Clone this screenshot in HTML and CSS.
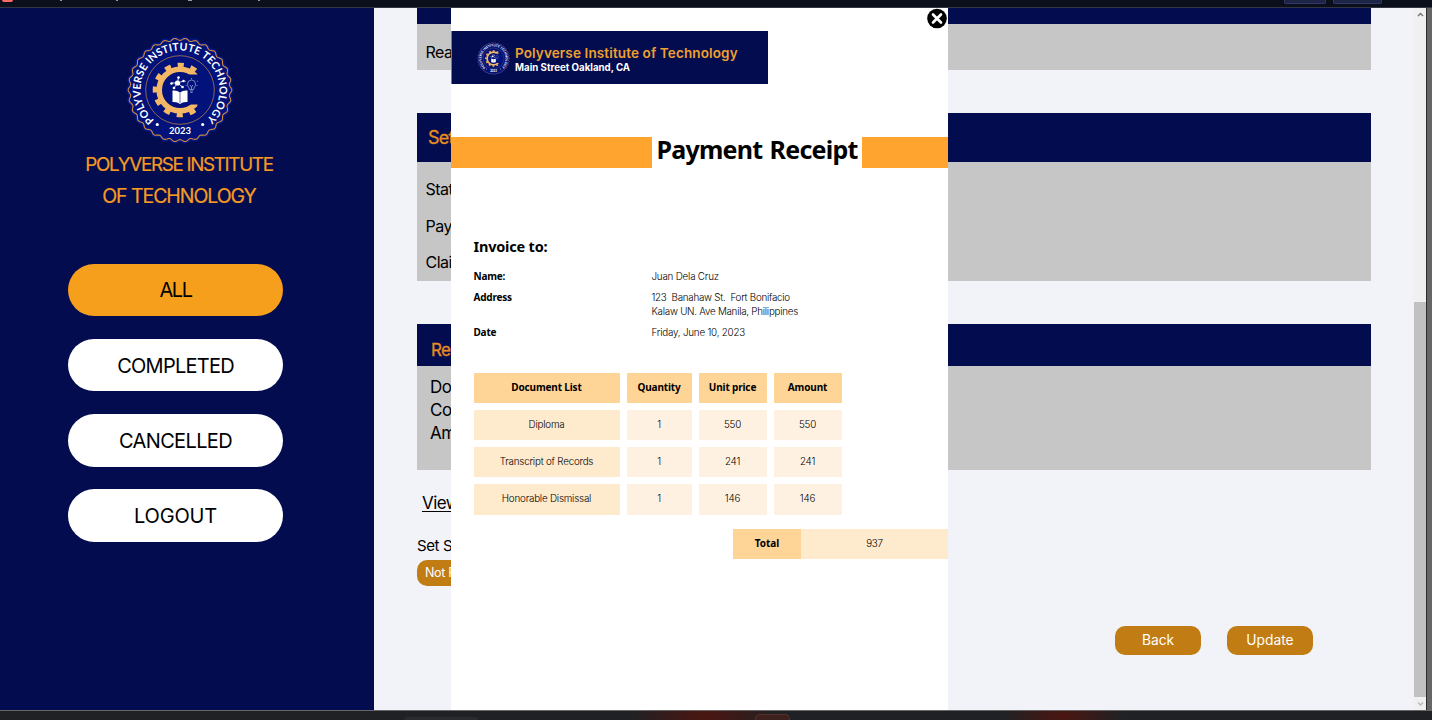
FILE: index.html
```html
<!DOCTYPE html>
<html lang="en">
<head>
<meta charset="utf-8">
<title>Polyverse Institute of Technology</title>
<link rel="stylesheet" href="styles.css">
</head>
<body>
<div class="screen">
  <div class="top-strip"><i class="rec"></i><i class="t t1"></i><i class="t t2"></i><i class="t t3"></i><i class="t t4"></i><i class="tab tab1"></i><i class="tab tab2"></i></div>
  <div class="window">
    <aside class="sidebar">
      <svg id="seal" class="logo" viewBox="-54 -54 108 108">
        <path class="scallop-glow" d=""/>
        <path class="scallop" d=""/>
        <circle r="34.3" fill="none" stroke="#9c6f4c" stroke-width=".9"/>
        <path id="ring" d="M-25.700 30A39.5 39.5 0 1 1 25.700 30" fill="none"/>
        <text class="seal-text"><textPath href="#ring">POLYVERSE INSTITUTE TECHNOLOGY</textPath></text>
        <text class="seal-year" x="0" y="43.5" text-anchor="middle">2023</text>
        <circle cx="-22.7" cy="34.5" r="1.6" fill="#fff"/>
        <circle cx="22.7" cy="34.5" r="1.6" fill="#fff"/>
        <clipPath id="cut"><path d="M-30-30H17.5V-15.500H8V14.500H17.5V30H-30Z"/></clipPath>
        <g clip-path="url(#cut)" fill="none" stroke="#f3b765">
          <circle r="20.8" stroke-width="5.600"/>
          <circle r="24.700" stroke-width="5.2" stroke-dasharray="6.2 6.733" stroke-dashoffset="3.1"/>
        </g>
        <g fill="#fff">
          <path d="M-7.500 0.500Q-3 0 0 2.500Q3 0 7.500 0.500V12Q3 11.500 0 14Q-3 11.500-7.500 12Z"/>
          <circle cx="-2.500" cy="-7" r="2.600"/><circle cx="-1.500" cy="-12.500" r="1.300"/><circle cx="3.500" cy="-9" r="1.300"/>
          <circle cx="-8.500" cy="-6.500" r="1.300"/><circle cx="-6" cy="-2" r="1.300"/><circle cx="2.500" cy="-3" r="1.300"/>
        </g>
        <path d="M-2.500-7L-1.500-12.500M-2.500-7L3.500-9M-2.500-7H-8.500M-2.500-7L-6-2M-2.500-7L2.500-3" stroke="#fff" stroke-width=".8"/>
        <path d="M0 2.500V13" stroke="#0a1a7a" stroke-width=".6"/>
        <g fill="none" stroke="#a9b2dc" stroke-width=".7">
          <path d="M9.500-.5C9-3 7.500-3.500 7.500-6A4 4 0 0 1 15.500-6C15.500-3.500 14-3 13.500-.5ZM10 1H13M10.500 2.500H12.500M10-5L11.500-3L13-5M11.500-3V-.5"/>
          <path d="M11.500-12V-10.800M6-8.500L5-9M17-8.500L18-9M5.500-4.500H6.500M16.500-4.500H17.500"/>
        </g>
      </svg>
      <div class="brand"><span class="b1">POLYVERSE INSTITUTE</span><br><span class="b2">OF TECHNOLOGY</span></div>
      <nav class="nav">
        <a class="pill active"><span class="p1">ALL</span></a>
        <a class="pill"><span class="p2">COMPLETED</span></a>
        <a class="pill"><span class="p3">CANCELLED</span></a>
        <a class="pill"><span class="p4">LOGOUT</span></a>
      </nav>
    </aside>
    <main class="content">
      <section class="card c1"><header></header><div class="body"><p>Rea</p></div></section>
      <section class="card c2"><header>Set</header><div class="body"><p>Stat</p><p>Pay</p><p>Clai</p></div></section>
      <section class="card c3"><header>Re</header><div class="body"><p>Do</p><p>Co</p><p>Am</p></div></section>
      <a class="view">View</a>
      <div class="set">Set S</div>
      <div class="badge">Not F</div>
      <div class="actions"><button><span>Back</span></button><button><span>Update</span></button></div>
    </main>
    <div class="scrollbar">
      <svg width="12" height="14" viewBox="0 0 12 14"><path d="M4 8L6.500 5.500L9 8" fill="none" stroke="#777" stroke-width="1.500"/></svg>
      <div class="thumb"></div>
      <svg width="12" height="13" viewBox="0 0 12 13"><path d="M4 5.500L6.500 8L9 5.500" fill="none" stroke="#bbb" stroke-width="1.500"/></svg>
    </div>
    <div class="edge"></div>

    <div class="modal">
      <svg class="close" viewBox="0 0 20 20"><circle cx="10" cy="10" r="9.800"/><path d="M6 6L14 14M14 6L6 14" stroke="#fff" stroke-width="2.600" stroke-linecap="round"/></svg>
      <div class="letterhead">
        <svg class="mini" viewBox="-54 -54 108 108"><use href="#seal" x="-54" y="-54" width="108" height="108"/></svg>
        <div><div class="org">Polyverse Institute of Technology</div><div class="street">Main Street Oakland, CA</div></div>
      </div>
      <div class="band"><h1><span>Payment Receipt</span></h1></div>
      <h2>Invoice to:</h2>
      <dl class="info">
        <dt>Name:</dt><dd>Juan Dela Cruz</dd>
        <dt>Address</dt><dd><span class="a1">123&nbsp; Banahaw St.&nbsp; Fort Bonifacio</span><br><span class="a2">Kalaw UN. Ave Manila, Philippines</span></dd>
        <dt>Date</dt><dd>Friday, June 10, 2023</dd>
      </dl>
      <div class="table">
        <b>Document List</b><b>Quantity</b><b>Unit price</b><b>Amount</b>
        <span class="doc">Diploma</span><span>1</span><span>550</span><span>550</span>
        <span class="doc">Transcript of Records</span><span>1</span><span>241</span><span>241</span>
        <span class="doc">Honorable Dismissal</span><span>1</span><span>146</span><span>146</span>
      </div>
      <div class="total"><b>Total</b><span>937</span></div>
    </div>
  </div>
  <div class="bottom-strip"><i class="dock d1"></i><i class="dock d2"></i></div>
</div>
<script src="seal.js"></script>
</body>
</html>
```
FILE: styles.css
```css
* { box-sizing: border-box; margin: 0; padding: 0; }
body { width: 1432px; height: 720px; overflow: hidden; font-family: Inter, "Open Sans", sans-serif; color: #000; }
.screen { display: flex; flex-direction: column; height: 720px; }
.top-strip { position: relative; height: 8px; background: #0b0e1b; border-bottom: 1px solid #343641; }
.top-strip i { position: absolute; top: 0; }
.rec { left: 2px; width: 11px; height: 2px; background: #fa6868; border-radius: 0 0 2px 2px; }
.t { width: 2px; height: 1px; background: #999; }
.t1 { left: 60px; } .t2 { left: 116px; } .t3 { left: 188px; width: 4px; } .t4 { left: 258px; }
.tab { height: 4px; background: #1e2445; border: 1px solid #303869; border-top: 0; border-radius: 0 0 2px 2px; }
.tab1 { left: 1284px; width: 42px; } .tab2 { left: 1333px; width: 49px; }
.window { position: relative; display: flex; height: 702px; background: #f2f3f9; }
.sidebar { width: 374px; background: #020c4f; padding-top: 28px; }
.logo { display: block; width: 108px; height: 108px; margin-left: 126px; }
.scallop { fill: #02127a; stroke: #cf8a3e; stroke-width: 1.1; }
.scallop-glow { fill: none; stroke: #04188a; stroke-width: 4; }
.seal-text { fill: #fff; font: 700 10.600px Lato, sans-serif; letter-spacing: .05px; }
.seal-year { fill: #fff; font: 700 9.5px Lato, sans-serif; }
.brand { width: 358px; margin-top: 5px; text-align: center; color: #f59a23; font-size: 19.5px; line-height: 30.5px; white-space: nowrap; -webkit-text-stroke: .2px #f59a23; }
.b1 { font-size: 18.8px; letter-spacing: -1.3px; } .b2 { letter-spacing: -1.05px; }
.nav { display: flex; flex-direction: column; gap: 22.8px; margin: 52.500px 0 0 68px; width: 215px; }
.pill { display: flex; align-items: center; justify-content: center; height: 52.5px; border-radius: 27px; background: #fff; font-size: 20px; padding-top: 1px; }
.pill.active { background: #f69f1c; }
.p1 { letter-spacing: -1.5px; } .p2 { letter-spacing: -.75px; } .p3 { letter-spacing: -.65px; } .p4 { letter-spacing: -.2px; }
.content { width: 1040px; padding-left: 43px; }
.card { width: 954px; background: #c6c6c6; margin-bottom: 43px; }
.card header { background: #020c4f; color: #e88d1f; letter-spacing: -.8px; -webkit-text-stroke: .3px #e88d1f; }
.card p { letter-spacing: -.5px; }
.c1 header { height: 16px; }
.c1 .body { height: 46px; padding-top: 10px; }
.c1 p, .c2 p { padding-left: 8.500px; font-size: 16px; line-height: 36.5px; }
.c2 header { height: 49px; padding-left: 11px; font-size: 18px; line-height: 50px; }
.c2 .body { height: 119px; padding-top: 9px; }
.c3 { margin-bottom: 0; }
.c3 header { height: 42px; padding-left: 14px; font-size: 17px; line-height: 52px; }
.c3 .body { height: 104px; padding: 9.500px 0 0 13px; }
.c3 p { font-size: 17px; line-height: 23.3px; }
.view { display: block; margin: 20px 0 0 5px; font-size: 17px; line-height: 26px; letter-spacing: -.6px; text-decoration: underline; text-decoration-thickness: 1px; text-underline-offset: 2px; }
.set { margin-top: 18px; font-size: 15px; line-height: 24px; letter-spacing: -.4px; }
.badge { margin-top: 2px; width: 90px; height: 26px; padding-left: 8px; border-radius: 10px; background: #c17c13; color: #fff; font-size: 12.5px; line-height: 26px; letter-spacing: -.3px; }
.actions { display: flex; justify-content: flex-end; gap: 26px; width: 896px; margin-top: 40px; }
.actions button { width: 86px; height: 28.6px; border: 0; border-radius: 10px; background: #c17c13; color: #fff; font: 400 13.8px Inter, sans-serif; }
.scrollbar { width: 12px; background: #f0f0f0; display: flex; flex-direction: column; justify-content: space-between; }
.thumb { height: 396px; margin-top: 280px; background: #c1c1c1; }
.edge { width: 6px; background: #666; border-left: 1px solid #2c2c2c; }

.modal { position: absolute; left: 451px; top: 0; width: 497px; height: 702px; background: #fff; padding-top: 22.5px; white-space: nowrap; font-family: "Noto Sans", sans-serif; }
.close { position: absolute; right: 1px; top: 0; width: 20px; height: 21px; }
.letterhead { display: flex; width: 317px; height: 53.5px; padding: 10px 0 0 25px; background: #020c4f; border-left: 1px solid #3b8ed8; color: #fff; font-family: Inter, sans-serif; }
.mini { width: 33px; height: 35px; margin-right: 5px; }
.org { margin-top: 3.5px; color: #f0a030; font-size: 13.500px; line-height: 18px; font-weight: 600; letter-spacing: .13px; }
.street { font-size: 9.700px; line-height: 11px; font-weight: 700; }
.band { height: 31px; margin-top: 53px; background: #ffa52f; padding-left: 201px; }
.band h1 { width: 210px; height: 31px; background: #fff; text-align: center; font-size: 25px; line-height: 25px; letter-spacing: -.75px; word-spacing: 1.5px; }
h2 { margin: 68px 0 0 22.500px; font-size: 14.5px; line-height: 20px; letter-spacing: -.2px; }
.info { display: grid; grid-template-columns: 178px 1fr; row-gap: 7.300px; margin: 12.500px 0 0 22.500px; font-size: 10px; line-height: 14px; }
.info dt { font-weight: 700; letter-spacing: -.2px; }
.info dd, .table span, .total span { font-family: Inter, sans-serif; font-size: 9.800px; font-weight: 300; color: #000; letter-spacing: -.2px; }
.info dd { padding-top: 1px; margin-bottom: -1px; }
.info .a1, .info .a2 { letter-spacing: -.25px; }
.table { display: grid; grid-template-columns: 146px 65px 68px 68px; grid-auto-rows: 30.4px; gap: 6.800px 7px; margin: 33.500px 0 0 22.500px; font-size: 10px; line-height: 28px; text-align: center; }
.table b { background: #fed497; letter-spacing: -.15px; }
.table span, .total span { line-height: 30px; background: #fef1e1; }
.table .doc { background: #feeacd; }
.total { display: grid; grid-template-columns: 68px 147px; height: 30px; margin: 14.500px 0 0 282px; font-size: 10px; line-height: 28px; text-align: center; }
.total b { background: #fed497; }
.total span { background: #feeacd; }
.bottom-strip { position: relative; height: 10px; border-top: 1px solid #666; background: radial-gradient(ellipse 60px 30px at 1063px 5px, #4c1611, transparent), radial-gradient(ellipse 75px 30px at 705px 5px, #4c1611, transparent), #202124; }
.dock { position: absolute; border-radius: 5px 5px 0 0; background: #2b2b2d; }
.d1 { left: 404px; top: 6px; width: 74px; height: 3px; }
.d2 { left: 755px; top: 3px; width: 35px; height: 6px; background: #3d211f; border: 1px solid #57302d; border-bottom: 0; }
```
FILE: seal.js
```js
// Builds the scalloped rim of the institute seal.
const points = [];
for (let i = 0; i < 360; i++) {
  const a = i * Math.PI / 180;
  const r = 50.7 + 1.1 * Math.cos(30 * a);
  points.push((r * Math.cos(a)).toFixed(2) + ' ' + (r * Math.sin(a)).toFixed(2));
}
const rim = 'M' + points.join('L') + 'Z';
document.querySelectorAll('.scallop, .scallop-glow').forEach(p => p.setAttribute('d', rim));
```
